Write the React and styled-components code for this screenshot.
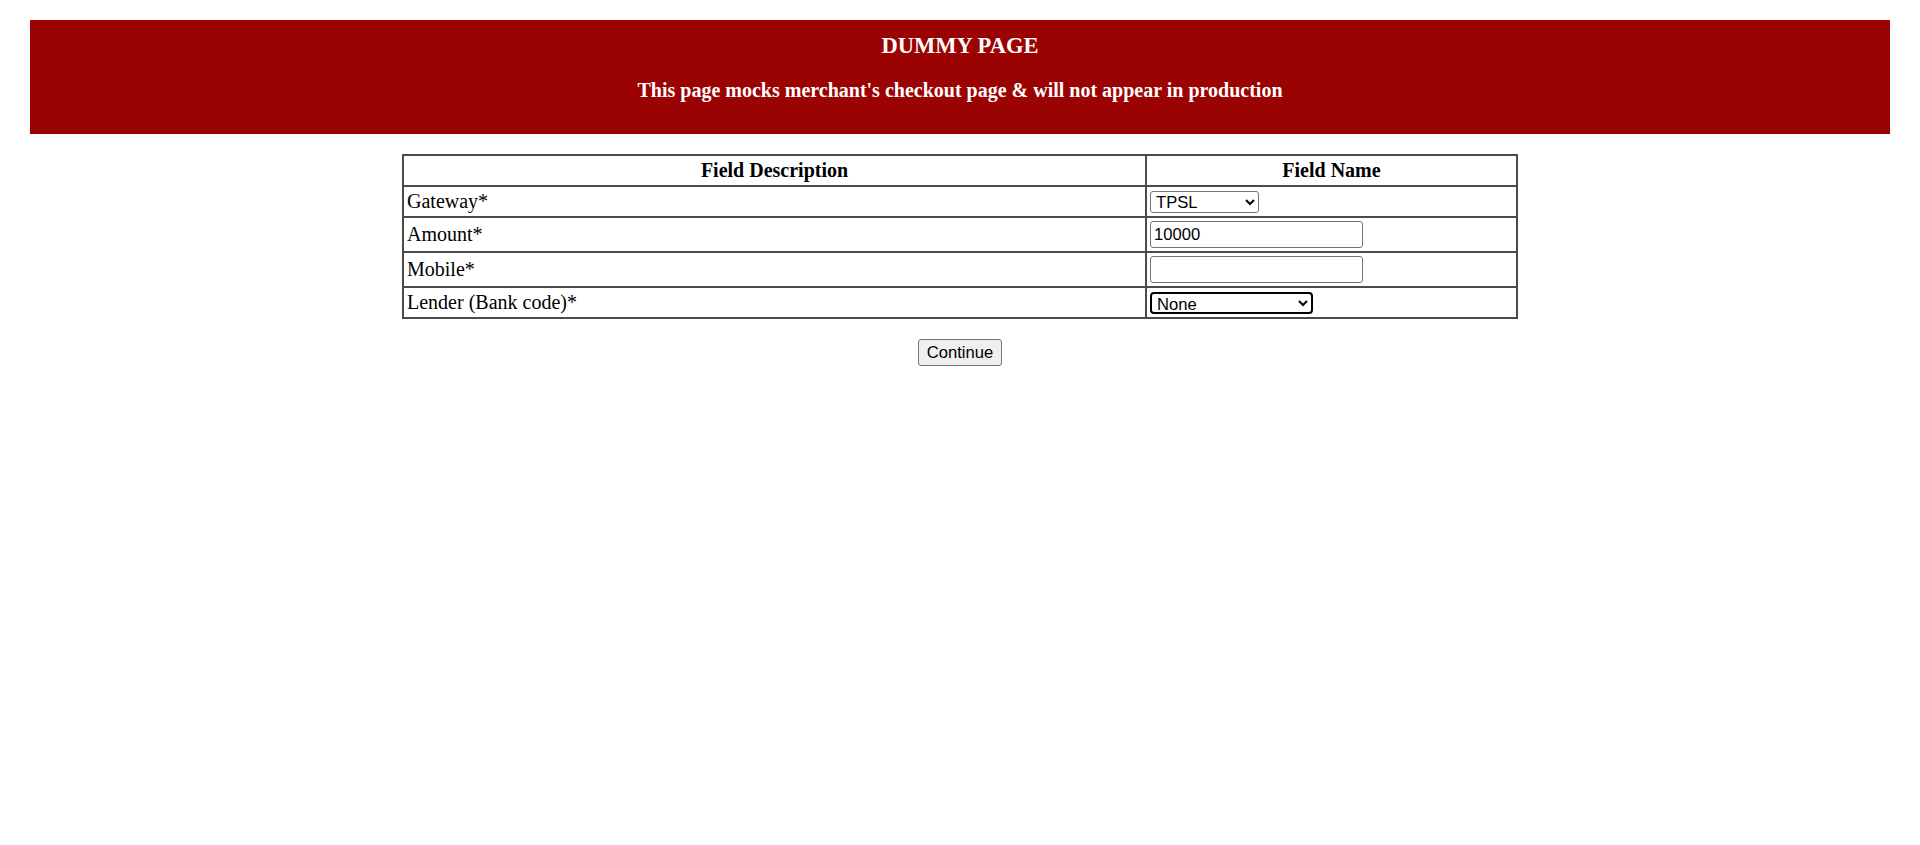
import React from 'react';
import styled, { createGlobalStyle } from 'styled-components';

const GlobalStyle = createGlobalStyle`
  html, body {
    margin: 0;
    padding: 0;
    background: #fff;
  }
  body {
    font-family: 'Liberation Serif', 'Times New Roman', serif;
    color: #000;
  }
`;

const Page = styled.div`
  padding: 20px 30px;
`;

const Banner = styled.div`
  background-color: #9b0202;
  color: #fff;
  text-align: center;
  padding: 13px 0 32px;
`;

const Title = styled.h3`
  margin: 0 0 21px;
  font-size: 22.5px;
  line-height: 25px;
  font-weight: bold;
`;

const Subtitle = styled.h4`
  margin: 0;
  font-size: 20px;
  line-height: 23px;
  font-weight: bold;
`;

const Table = styled.table`
  margin: 20px auto 0;
  width: 1116px;
  table-layout: fixed;
  border-collapse: separate;
  border-spacing: 0;
  border: 1px solid #4b4b4b;
`;

const HeadCell = styled.th`
  box-sizing: border-box;
  width: ${props => (props.wide ? '743px' : 'auto')};
  border: 1px solid #4b4b4b;
  padding: 2px;
  font-size: 20px;
  line-height: 25px;
  font-weight: bold;
  text-align: center;
`;

const Cell = styled.td`
  border: 1px solid #4b4b4b;
  padding: 2px 2px 2px 3px;
  font-size: 20px;
  line-height: 25px;
  text-align: left;
  vertical-align: middle;
`;

const Select = styled.select`
  box-sizing: border-box;
  display: block;
  width: ${props => props.width}px;
  height: 22px;
  margin: 0;
  padding: 0 1px;
  font-family: 'Liberation Sans', Arial, sans-serif;
  font-size: 16.6px;
  color: #000;
  background: #fff;
  border: ${props => (props.focused ? '2px solid #000' : '1px solid #767676')};
  border-radius: ${props => (props.focused ? '4px' : '3px')};
  outline: none;
`;

const Input = styled.input`
  box-sizing: border-box;
  display: block;
  width: 213px;
  height: 27px;
  margin: 1px 0;
  padding: 1px 3px;
  font-family: 'Liberation Sans', Arial, sans-serif;
  font-size: 16.6px;
  color: #000;
  background: #fff;
  border: 1px solid #767676;
  border-radius: 3px;
  outline: none;
`;

const Actions = styled.div`
  text-align: center;
  margin-top: 20px;
`;

const Button = styled.button`
  box-sizing: border-box;
  height: 27px;
  padding: 1px 8px;
  font-family: 'Liberation Sans', Arial, sans-serif;
  font-size: 16.6px;
  color: #000;
  background-color: #efefef;
  border: 1px solid #767676;
  border-radius: 3px;
`;

export default function App() {
  return (
    <Page>
      <GlobalStyle />
      <Banner>
        <Title>DUMMY PAGE</Title>
        <Subtitle>This page mocks merchant's checkout page &amp; will not appear in production</Subtitle>
      </Banner>
      <form onSubmit={e => e.preventDefault()}>
        <Table>
          <thead>
            <tr>
              <HeadCell wide>Field Description</HeadCell>
              <HeadCell>Field Name</HeadCell>
            </tr>
          </thead>
          <tbody>
            <tr>
              <Cell>Gateway*</Cell>
              <Cell>
                <Select width={109} defaultValue="TPSL">
                  <option value="TPSL">TPSL</option>
                </Select>
              </Cell>
            </tr>
            <tr>
              <Cell>Amount*</Cell>
              <Cell>
                <Input type="text" defaultValue="10000" />
              </Cell>
            </tr>
            <tr>
              <Cell>Mobile*</Cell>
              <Cell>
                <Input type="text" defaultValue="" />
              </Cell>
            </tr>
            <tr>
              <Cell>Lender (Bank code)*</Cell>
              <Cell>
                <Select width={163} focused defaultValue="None">
                  <option value="None">None</option>
                </Select>
              </Cell>
            </tr>
          </tbody>
        </Table>
        <Actions>
          <Button type="submit">Continue</Button>
        </Actions>
      </form>
    </Page>
  );
}
